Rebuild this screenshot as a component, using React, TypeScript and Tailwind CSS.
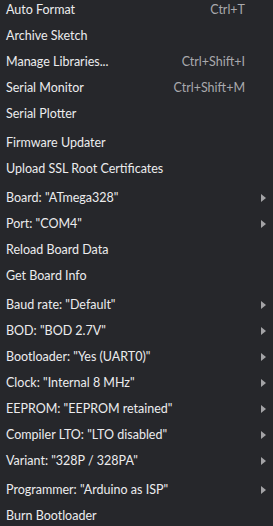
import React from "react";

type MenuItem =
  | { kind: "item"; label: string; shortcut?: string; submenu?: boolean }
  | { kind: "sep" };

const items: MenuItem[] = [
  { kind: "item", label: "Auto Format", shortcut: "Ctrl+T" },
  { kind: "item", label: "Archive Sketch" },
  { kind: "item", label: "Manage Libraries...", shortcut: "Ctrl+Shift+I" },
  { kind: "item", label: "Serial Monitor", shortcut: "Ctrl+Shift+M" },
  { kind: "item", label: "Serial Plotter" },
  { kind: "sep" },
  { kind: "item", label: "Firmware Updater" },
  { kind: "item", label: "Upload SSL Root Certificates" },
  { kind: "sep" },
  { kind: "item", label: 'Board: "ATmega328"', submenu: true },
  { kind: "item", label: 'Port: "COM4"', submenu: true },
  { kind: "item", label: "Reload Board Data" },
  { kind: "item", label: "Get Board Info" },
  { kind: "sep" },
  { kind: "item", label: 'Baud rate: "Default"', submenu: true },
  { kind: "item", label: 'BOD: "BOD 2.7V"', submenu: true },
  { kind: "item", label: 'Bootloader: "Yes (UART0)"', submenu: true },
  { kind: "item", label: 'Clock: "Internal 8 MHz"', submenu: true },
  { kind: "item", label: 'EEPROM: "EEPROM retained"', submenu: true },
  { kind: "item", label: 'Compiler LTO: "LTO disabled"', submenu: true },
  { kind: "item", label: 'Variant: "328P / 328PA"', submenu: true },
  { kind: "sep" },
  { kind: "item", label: 'Programmer: "Arduino as ISP"', submenu: true },
  { kind: "item", label: "Burn Bootloader" },
];

const SubmenuArrow = () => (
  <svg width="5" height="8" viewBox="0 0 5 8" className="shrink-0">
    <path d="M0 0 L5 4 L0 8 Z" fill="#a3a3a6" />
  </svg>
);

export default function App() {
  return (
    <div
      className="w-[273px] h-[526px] overflow-hidden bg-[#26272b] text-[#ececee] text-[12.5px]"
      style={{ fontFamily: 'Lato, "Liberation Sans", sans-serif' }}
    >
      <div className="flex flex-col -mt-[3px]">
        {items.map((it, i) =>
          it.kind === "sep" ? (
            <div key={i} className="h-[3px]" />
          ) : (
            <div key={i} className="flex items-center h-[26px] pl-[6px] pr-[7px]">
              <span className="flex-1 whitespace-nowrap">{it.label}</span>
              {it.shortcut && (
                <span className="text-[#a9a9ad] mr-[21px] whitespace-nowrap">
                  {it.shortcut}
                </span>
              )}
              {it.submenu && <SubmenuArrow />}
            </div>
          )
        )}
      </div>
    </div>
  );
}
